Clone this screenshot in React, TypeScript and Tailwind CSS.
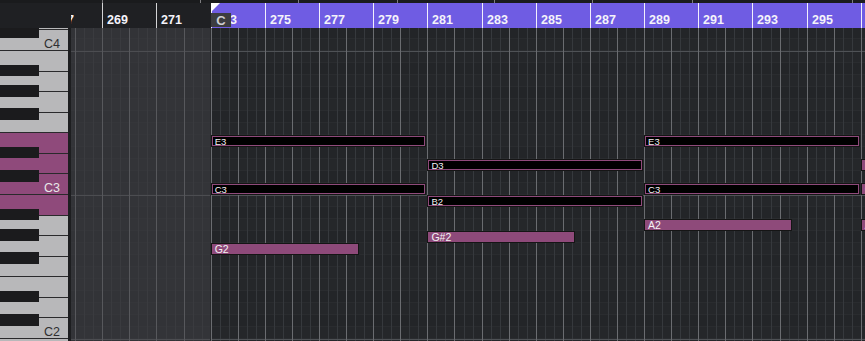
import React from "react";

// bar n sits at this x on the page
const barX = (n: number) => 102.3 + (n - 269) * 27.09;
const GRID_LEFT = 71;
const GRID_TOP = 28;
const gx = (n: number) => barX(n) - GRID_LEFT;
// semitone s relative to C3 -> row top inside the grid
const rowTop = (s: number) => 155 - 12 * s;
const px = (x: number) => Math.round(x) + 0.5;

const W = 794;
const H = 313;
const SPLIT = 140;

const isBlack = (s: number) => [1, 3, 6, 8, 10].includes(((s % 12) + 12) % 12);

const notes = [
  { label: "E3", s: 4, a: 273, b: 281, black: true },
  { label: "C3", s: 0, a: 273, b: 281, black: true },
  { label: "G2", s: -5, a: 273, b: 278.5, black: false },
  { label: "D3", s: 2, a: 281, b: 289, black: true },
  { label: "B2", s: -1, a: 281, b: 289, black: true },
  { label: "G#2", s: -4, a: 281, b: 286.5, black: false },
  { label: "E3", s: 4, a: 289, b: 297, black: true },
  { label: "C3", s: 0, a: 289, b: 297, black: true },
  { label: "A2", s: -3, a: 289, b: 294.5, black: false },
  { label: "D3", s: 2, a: 297, b: 302, black: false },
  { label: "C3", s: 0, a: 297, b: 302, black: false },
  { label: "A2", s: -3, a: 297, b: 302, black: false },
];

const whiteKeys = [
  "D4", "C4", "B3", "A3", "G3", "F3", "E3", "D3", "C3",
  "B2", "A2", "G2", "F2", "E2", "D2", "C2", "B1",
];
const lit = ["E3", "D3", "C3", "B2"];

// octave bottoms (page y) and black key offsets from them
const octaveBottoms = [51, 195, 339];
const blackOffsets = [25, 48.3, 87, 110, 130.5];

const overviewTicks = [102, 200, 298, 397, 494, 592, 692, 852];

function Grid() {
  const rows = [];
  for (let s = 13; s >= -13; s--) rows.push(s);
  const bars = [];
  for (let n = 267; n <= 298; n++) bars.push(n);

  return (
    <svg width={W} height={H} className="absolute inset-0 block">
      <rect x={0} y={0} width={SPLIT} height={H} fill="#333438" />
      <rect x={SPLIT} y={0} width={W - SPLIT} height={H} fill="#25272a" />
      {rows.map((s) =>
        isBlack(s) ? (
          <g key={"r" + s}>
            <rect x={0} y={rowTop(s)} width={SPLIT} height={12} fill="#323337" />
            <rect x={SPLIT} y={rowTop(s)} width={W - SPLIT} height={12} fill="#232528" />
          </g>
        ) : null
      )}
      {rows.map((s) => (
        <g key={"l" + s}>
          <line x1={0} x2={SPLIT} y1={rowTop(s) + 11.5} y2={rowTop(s) + 11.5} stroke="#35363a" />
          <line x1={SPLIT} x2={W} y1={rowTop(s) + 11.5} y2={rowTop(s) + 11.5} stroke="#2a2c2f" />
        </g>
      ))}
      {bars.map((n) =>
        [1, 2].map((k) => {
          const x = gx(n) + k * 9.03;
          return (
            <line
              key={"b" + n + k}
              x1={px(x)}
              x2={px(x)}
              y1={0}
              y2={H}
              stroke={x < SPLIT ? "#3a3b3f" : "#36393d"}
            />
          );
        })
      )}
      {rows
        .filter((s) => ((s % 12) + 12) % 12 === 0)
        .map((s) => (
          <g key={"o" + s}>
            <line x1={0} x2={SPLIT} y1={rowTop(s) + 12.5} y2={rowTop(s) + 12.5} stroke="#4c4d51" />
            <line x1={SPLIT} x2={W} y1={rowTop(s) + 12.5} y2={rowTop(s) + 12.5} stroke="#4f5256" />
          </g>
        ))}
      {bars.map((n) => {
        const x = gx(n);
        return (
          <line
            key={"B" + n}
            x1={px(x)}
            x2={px(x)}
            y1={0}
            y2={H}
            stroke={x < SPLIT - 1 ? "#57585c" : "#6a6c70"}
          />
        );
      })}
      <line x1={SPLIT - 0.5} x2={SPLIT - 0.5} y1={0} y2={H} stroke="#2a2b2e" />
    </svg>
  );
}

function Keyboard() {
  return (
    <div className="relative w-[68px] h-full overflow-hidden bg-[#b8b8ba]">
      <div className="flex flex-col mt-[-18.1px]">
        {whiteKeys.map((k) => {
          const on = lit.includes(k);
          const isC = k[0] === "C";
          return (
            <div
              key={k}
              className={
                "h-[20.571px] shrink-0 border-b border-[#2a2a2c] flex items-end justify-end pr-[8px] " +
                (on ? "bg-[#8f4a7b]" : "bg-[#b8b8ba]")
              }
            >
              {isC && (
                <span
                  className={
                    "text-[12.5px] leading-[12px] " +
                    (on ? "text-[#e8e8e8]" : "text-[#2e2e30]")
                  }
                >
                  {k}
                </span>
              )}
            </div>
          );
        })}
      </div>
      {octaveBottoms.map((ob) =>
        blackOffsets.map((off) => (
          <div
            key={ob + "-" + off}
            className="absolute left-0 w-[39px] bg-[#1b1b1d]"
            style={{ top: ob - off - GRID_TOP, height: 11.7 }}
          />
        ))
      )}
    </div>
  );
}

function Ruler() {
  const labels = [];
  for (let n = 267; n <= 297; n += 2) labels.push(n);
  return (
    <div className="relative flex-1 overflow-hidden flex">
      <div className="w-[140px] shrink-0 bg-[#1f2023]" />
      <div className="flex-1 bg-[#6f5ce3]" />
      {labels.map((n) => {
        const x = Math.round(gx(n));
        return (
          <React.Fragment key={n}>
            <div
              className={"absolute top-0 h-[25px] w-px " + (x < SPLIT ? "bg-[#d4d4d6]" : "bg-[#f2f0fc]")}
              style={{ left: x }}
            />
            <span
              className="absolute top-[11px] text-[12.5px] leading-[12.5px] font-bold text-[#f4f3fa]"
              style={{ left: x + 5 }}
            >
              {n}
            </span>
          </React.Fragment>
        );
      })}
      <svg width={9} height={9} className="absolute top-0 left-[140px]">
        <polygon points="0,0 9,0 0,9" fill="#ffffff" />
      </svg>
      <div className="absolute left-[140px] top-[10px] w-[20px] h-[14px] bg-[#3c3d40] flex items-center justify-center">
        <span className="text-[13px] leading-none font-bold text-[#cfcfd2]">C</span>
      </div>
    </div>
  );
}

export default function App() {
  return (
    <div className="w-[865px] h-[341px] overflow-hidden bg-[#1f2023] flex flex-col font-['Liberation_Sans',sans-serif] select-none">
      <svg width={865} height={3} className="block shrink-0">
        <rect x={0} y={0} width={865} height={3} fill="#1a1b1d" />
        {overviewTicks.map((t) => (
          <line key={t} x1={t + 0.5} x2={t + 0.5} y1={0} y2={3} stroke="#7d7d80" />
        ))}
      </svg>

      <div className="h-[25px] flex shrink-0">
        <div className="w-[71px] shrink-0 bg-[#1f2023]" />
        <Ruler />
      </div>

      <div className="flex flex-1 min-h-0">
        <Keyboard />
        <div className="w-[3px] shrink-0 bg-[#1d1e20]" />
        <div className="relative flex-1 overflow-hidden">
          <Grid />
          {notes.map((nt, i) => {
            const left = gx(nt.a);
            const width = (nt.b - nt.a) * 27.09 - 1;
            return (
              <div
                key={i}
                className="absolute h-[12px] border border-[#151515] flex"
                style={{ left, top: rowTop(nt.s), width }}
              >
                <div
                  className={
                    "flex-1 flex items-center pl-[2px] overflow-hidden " +
                    (nt.black ? "bg-black border border-[#8f4a7b]" : "bg-[#8e4a7a]")
                  }
                >
                  <span
                    className={
                      "text-[#f4f2f4] whitespace-nowrap " +
                      (nt.black ? "text-[9.5px] leading-[9px]" : "text-[10.5px] leading-[10px] pl-[1px]")
                    }
                  >
                    {nt.label}
                  </span>
                </div>
              </div>
            );
          })}
        </div>
      </div>
    </div>
  );
}
